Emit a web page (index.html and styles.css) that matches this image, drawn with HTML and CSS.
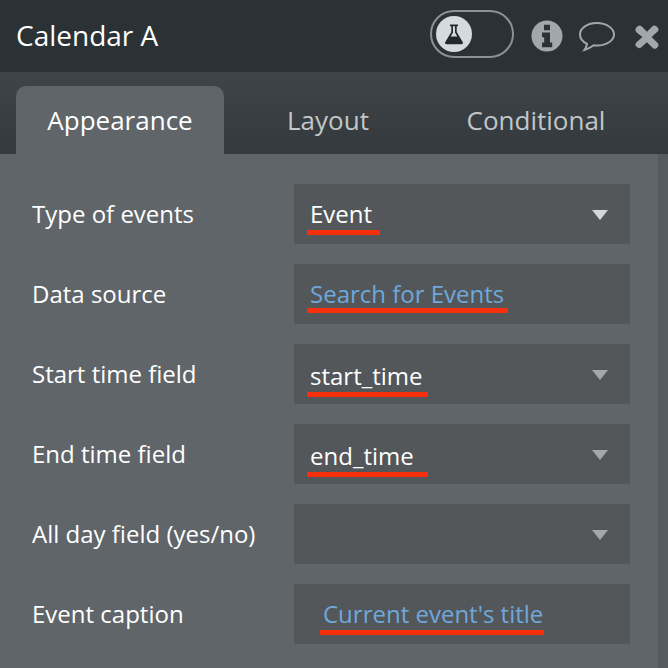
FILE: index.html
```html
<!DOCTYPE html>
<html lang="en">
<head>
    <meta charset="UTF-8">
    <meta name="viewport" content="width=device-width, initial-scale=1.0">
    <title>Calendar A</title>
    <link rel="stylesheet" href="styles.css">
</head>
<body>
    <div class="editor">
        <div class="header">
            <div class="title">Calendar A</div>
            <div class="toggle">
                <div class="knob">
                    <svg width="24" height="24" viewBox="0 0 24 24">
                        <path d="M8 2.500h8v1.800h-1.300v5.600l6 10.200c.7 1.200 0 2.200-1.200 2.200H4.500c-1.200 0-1.900-1-1.200-2.200l6-10.200V4.300H8z" fill="#23282b"/>
                        <path d="M11 4.300h2v6.100l2.300 4.100H8.700l2.300-4.100z" fill="#d5dade"/>
                    </svg>
                </div>
            </div>
            <svg class="icon-info" width="32" height="32" viewBox="0 0 32 32">
                <circle cx="16" cy="16" r="15.500" fill="#a1a8ab"/>
                <path d="M13 4.800h6v5.400h-6zM11 12.600h8v10h2.200v4.600H11v-4.600h2.200v-5.400H11z" fill="#2b3235"/>
            </svg>
            <svg class="icon-chat" width="38" height="32" viewBox="0 0 38 32">
                <path d="M19 2C9.500 2 2 7 2 13.500c0 4 2.800 7.300 7 9.300-.3 2.200-1.300 4.300-2.600 6.200 3.600-.9 6.800-2.900 9.300-4.700 1 .2 2.200.2 3.300.2 9.500 0 17-5 17-11S28.500 2 19 2z" fill="none" stroke="#a1a8ab" stroke-width="2"/>
            </svg>
            <svg class="icon-close" width="30" height="30" viewBox="0 0 26 26">
                <path d="M4 9l5 4-5 4.500c-2 2-.5 3.500 0 4s2.500 2.500 4.500 0L13 17.500l4.500 4.500c2 2.500 4 .5 4.500 0s2-2 0-4L17 13l5-4.500c2-2 .5-3.500 0-4S19.500 2 17.500 4L13 8.500 8.500 4C6.500 2 4.500 4 4 4.500S2 7 4 9z" fill="#a1a8ab"/>
            </svg>
        </div>

        <div class="tabs">
            <div class="tab active">Appearance</div>
            <div class="tab">Layout</div>
            <div class="tab">Conditional</div>
        </div>

        <div class="panel">
            <div class="form">
                <div class="row">
                    <div class="label">Type of events</div>
                    <div class="field">
                        <span class="value">Event<i class="mark mark-type"></i></span>
                        <span class="arrow bright"></span>
                    </div>
                </div>
                <div class="row">
                    <div class="label">Data source</div>
                    <div class="field">
                        <span class="value link">Search for Events<i class="mark mark-source"></i></span>
                    </div>
                </div>
                <div class="row">
                    <div class="label">Start time field</div>
                    <div class="field">
                        <span class="value low">start_time<i class="mark mark-start"></i></span>
                        <span class="arrow"></span>
                    </div>
                </div>
                <div class="row">
                    <div class="label">End time field</div>
                    <div class="field">
                        <span class="value low">end_time<i class="mark mark-end"></i></span>
                        <span class="arrow"></span>
                    </div>
                </div>
                <div class="row">
                    <div class="label">All day field (yes/no)</div>
                    <div class="field">
                        <span class="value"></span>
                        <span class="arrow"></span>
                    </div>
                </div>
                <div class="row">
                    <div class="label">Event caption</div>
                    <div class="field indented">
                        <span class="value link">Current event's title<i class="mark mark-caption"></i></span>
                    </div>
                </div>
            </div>
            <div class="scroll-strip"></div>
        </div>
    </div>
</body>
</html>
```

FILE: styles.css
```css
body {
    font-family: 'Open Sans', sans-serif;
    margin: 0;
    padding: 0;
    background-color: #5f6569;
}
.editor {
    width: 668px;
    height: 668px;
    overflow: hidden;
    display: flex;
    flex-direction: column;
}
.header {
    height: 72px;
    flex: none;
    background: #2b3235;
    display: flex;
    align-items: center;
    box-sizing: border-box;
    padding-left: 16px;
}
.title {
    color: #fff;
    font-size: 28px;
    width: 414px;
    margin-top: -2px;
}
.toggle {
    width: 84px;
    height: 48px;
    box-sizing: border-box;
    border: 2px solid #8b9194;
    border-radius: 24px;
    padding: 4px;
    margin-top: -4px;
}
.knob {
    width: 36px;
    height: 36px;
    border-radius: 50%;
    background: #d5dade;
    display: flex;
    align-items: center;
    justify-content: center;
}
.icon-info {
    margin-left: 17px;
}
.icon-chat {
    margin-left: 15px;
    margin-top: 2px;
}
.icon-close {
    margin-left: 16px;
    margin-top: 2px;
}
.tabs {
    height: 82px;
    flex: none;
    background: linear-gradient(#3e4447, #33393c);
    display: flex;
    align-items: flex-end;
    padding-left: 16px;
}
.tab {
    width: 208px;
    height: 68px;
    line-height: 68px;
    color: #c2c6c8;
    font-size: 26px;
    text-align: center;
}
.tab.active {
    background: #5f6569;
    border-radius: 10px 10px 0 0;
    color: #fff;
}
.panel {
    flex: 1;
    display: flex;
}
.form {
    width: 658px;
    box-sizing: border-box;
    padding: 30px 28px 0 32px;
    display: flex;
    flex-direction: column;
    gap: 20px;
}
.row {
    height: 60px;
    display: flex;
    align-items: center;
    justify-content: space-between;
}
.label {
    color: #fff;
    font-size: 24px;
    margin-top: -2px;
}
.field {
    width: 336px;
    height: 60px;
    box-sizing: border-box;
    background: #53575a;
    display: flex;
    align-items: center;
    justify-content: space-between;
    padding: 0 22px 0 16px;
}
.field.indented {
    padding-left: 29px;
}
.value {
    position: relative;
    color: #fff;
    font-size: 24px;
    margin-top: -2px;
}
.value.low {
    margin-top: 2px;
}
.value.link {
    color: #6ea8dc;
}
.mark {
    position: absolute;
    top: 100%;
    left: -3px;
    height: 5px;
    background: #f5300a;
    border-radius: 1px;
}
.mark-type {
    width: 73px;
}
.mark-source {
    width: 201px;
    margin-top: -2px;
}
.mark-start {
    width: 121px;
}
.mark-end {
    width: 121px;
}
.mark-caption {
    width: 224px;
}
.arrow {
    width: 0;
    height: 0;
    border-left: 8px solid transparent;
    border-right: 8px solid transparent;
    border-top: 10px solid #a3a7a9;
    margin-top: 1px;
}
.arrow.bright {
    border-top-color: #d4d7d8;
}
.scroll-strip {
    width: 10px;
    background: #565b5f;
}
```
